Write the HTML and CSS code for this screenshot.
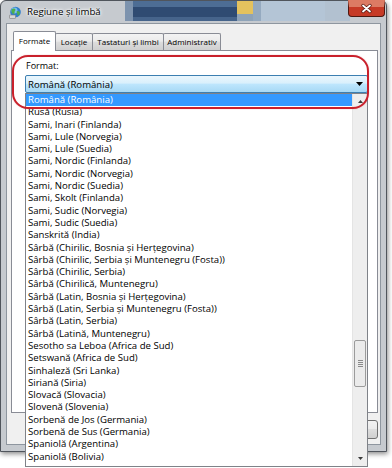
FILE: index.html
```html
<!DOCTYPE html>
<html lang="ro">
<head>
<meta charset="utf-8">
<title>Regiune și limbă</title>
<link rel="stylesheet" href="styles.css">
</head>
<body>
<div class="window">
  <div class="titlebar">
    <svg class="appicon" width="13" height="13" viewBox="0 0 13 13">
      <circle cx="6.5" cy="6" r="5.3" fill="#2f7fcc"/>
      <circle cx="5.5" cy="4.6" r="3" fill="#7cc0f0"/>
      <path d="M3 3.2 C4.5 2.2 6 2.4 6.4 3.6 C6.8 4.8 5.2 5.2 5.6 6.6 C5.9 7.8 4.6 8.6 3.6 7.6 C2.6 6.6 2 4.4 3 3.2 Z" fill="#4fb04a"/>
      <path d="M8 5.2 C9.2 4.8 10.8 5.6 10.9 7 C10.6 8.6 9.4 9.8 8.6 9.2 C8 8.4 8.6 7.4 7.8 6.6 C7.4 6 7.5 5.4 8 5.2 Z" fill="#4fb04a"/>
      <rect x="0.5" y="9" width="6" height="3.5" rx="0.6" fill="#d8d8d8" stroke="#7a7a7a" stroke-width="0.6"/>
    </svg>
    <span class="title">Regiune și limbă</span>
    <div class="desk">
      <div class="d0"></div>
      <div class="d1"></div>
      <div class="d2"></div>
      <div class="d3"></div>
      <div class="d4"></div>
    </div>
    <div class="close">
      <svg width="13" height="11" viewBox="0 0 13 11">
        <path d="M3 2.5 L10 8.5 M10 2.5 L3 8.5" stroke="#5a1a12" stroke-width="3.4" stroke-linecap="round"/>
        <path d="M3 2.5 L10 8.5 M10 2.5 L3 8.5" stroke="#ffffff" stroke-width="1.8" stroke-linecap="round"/>
      </svg>
    </div>
  </div>
  <div class="client">
    <div class="tabs">
      <div class="tab active w1">Formate</div>
      <div class="tab w2">Locație</div>
      <div class="tab w3">Tastaturi și limbi</div>
      <div class="tab w4">Administrativ</div>
    </div>
    <div class="panel">
      <div class="label">Format:</div>
      <div class="combo">
        <span>Română (România)</span>
        <svg class="carrow" width="7" height="4" viewBox="0 0 7 4"><path d="M0 0 H7 L3.5 4 Z" fill="#000"/></svg>
      </div>
    </div>
    <div class="buttons">
      <div class="btn">OK</div>
      <div class="btn">Anulare</div>
      <div class="btn">Aplicare</div>
    </div>
  </div>
</div>

<div class="droplist">
  <ul class="items">
    <li class="sel">Română (România)</li>
    <li>Rusă (Rusia)</li>
    <li>Sami, Inari (Finlanda)</li>
    <li>Sami, Lule (Norvegia)</li>
    <li>Sami, Lule (Suedia)</li>
    <li>Sami, Nordic (Finlanda)</li>
    <li>Sami, Nordic (Norvegia)</li>
    <li>Sami, Nordic (Suedia)</li>
    <li>Sami, Skolt (Finlanda)</li>
    <li>Sami, Sudic (Norvegia)</li>
    <li>Sami, Sudic (Suedia)</li>
    <li>Sanskrită (India)</li>
    <li>Sârbă (Chirilic, Bosnia și Herțegovina)</li>
    <li>Sârbă (Chirilic, Serbia și Muntenegru (Fosta))</li>
    <li>Sârbă (Chirilic, Serbia)</li>
    <li>Sârbă (Chirilică, Muntenegru)</li>
    <li>Sârbă (Latin, Bosnia și Herțegovina)</li>
    <li>Sârbă (Latin, Serbia și Muntenegru (Fosta))</li>
    <li>Sârbă (Latin, Serbia)</li>
    <li>Sârbă (Latină, Muntenegru)</li>
    <li>Sesotho sa Leboa (Africa de Sud)</li>
    <li>Setswană (Africa de Sud)</li>
    <li>Sinhaleză (Sri Lanka)</li>
    <li>Siriană (Siria)</li>
    <li>Slovacă (Slovacia)</li>
    <li>Slovenă (Slovenia)</li>
    <li>Sorbenă de Jos (Germania)</li>
    <li>Sorbenă de Sus (Germania)</li>
    <li>Spaniolă (Argentina)</li>
    <li>Spaniolă (Bolivia)</li>
  </ul>
  <div class="vscroll">
    <div class="sbtn"><svg width="5" height="3" viewBox="0 0 5 3"><path d="M0 3 L2.5 0 L5 3 Z" fill="#3a3a3a"/></svg></div>
    <div class="track">
      <div class="thumb"><span></span><span></span><span></span><span></span></div>
    </div>
    <div class="sbtn"><svg width="5" height="3" viewBox="0 0 5 3"><path d="M0 0 L5 0 L2.5 3 Z" fill="#3a3a3a"/></svg></div>
  </div>
</div>

<div class="ring"></div>
</body>
</html>
```

FILE: styles.css
```css
* { box-sizing: border-box; }

body {
  margin: 0;
  width: 392px;
  height: 468px;
  overflow: hidden;
  background: #ffffff;
  position: relative;
  font-family: "Open Sans", "Liberation Sans", sans-serif;
  color: #000;
}

.window {
  width: 387px;
  height: 452px;
  border: 1px solid #50555c;
  border-radius: 6px 6px 0 0;
  box-shadow: 1px 2px 5px rgba(0, 0, 0, 0.45);
  padding: 0 5px 6px 5px;
  display: flex;
  flex-direction: column;
  background: #c6cacf;
}

.titlebar {
  height: 22px;
  display: flex;
  align-items: stretch;
  flex: none;
}

.appicon {
  margin-left: 3px;
  margin-top: 5px;
  flex: none;
}

.title {
  margin-left: 5px;
  margin-top: 5px;
  font-size: 9.7px;
  line-height: 12px;
  text-shadow: 0 0 5px #fff, 0 0 3px #fff, 0 0 2px #fff;
  color: #000;
  white-space: nowrap;
  flex: none;
}

.desk {
  flex: 1;
  margin-left: 24px;
  margin-right: -2px;
  height: 20px;
  display: flex;
  background-color: #3f5f87;
}

.d0 { width: 8px; background-color: #7d93ae; }
.d1 { width: 104px; background-color: #2f4b72; border-top: 6px solid #4d6d94; border-bottom: 4px solid #46648b; }
.d2 { width: 16px; background-color: #e4c25e; border-bottom: 7px solid #8ea3b8; }
.d3 { width: 72px; background-color: #b4c5d6; border-left: 8px solid #95aac0; }
.d4 { flex: 1; background-color: #b2c1d0; }

.close {
  margin-right: -4px;
  margin-top: -1px;
  width: 37px;
  height: 17px;
  flex: none;
  border: 1px solid #4e1810;
  border-top: 7px solid #dc7b64;
  border-radius: 0 0 4px 4px;
  background-color: #c63a26;
  display: flex;
  align-items: center;
  justify-content: center;
}

.close svg { margin-top: -7px; }

.client {
  flex: 1;
  border: 1px solid #8e969f;
  background: #f0f0f0;
  display: flex;
  flex-direction: column;
  padding: 7px 2px 0 4px;
}

.tabs {
  height: 19px;
  display: flex;
  align-items: flex-end;
  padding-left: 2px;
  flex: none;
}

.tab {
  height: 17px;
  border: 1px solid #898c95;
  border-bottom: none;
  margin-left: -1px;
  border-radius: 2px 2px 0 0;
  background: linear-gradient(#f3f3f3 0%, #ebebeb 45%, #dddddd 50%, #cfcfcf 100%);
  font-size: 8px;
  line-height: 15px;
  text-align: center;
  color: #000;
  white-space: nowrap;
}

.tab.active {
  height: 20px;
  margin-bottom: -1px;
  margin-left: 0;
  background: #ffffff;
  position: relative;
  z-index: 2;
  line-height: 18px;
}

.w1 { width: 43px; }
.w2 { width: 38px; }
.w3 { width: 72px; }
.w4 { width: 58px; }

.panel {
  flex: 1;
  border: 1px solid #898c95;
  background: #ffffff;
  padding: 9px 9px 0 13px;
}

.label {
  font-size: 9px;
  line-height: 12px;
  margin-left: 1px;
  margin-bottom: 3px;
}

.combo {
  height: 18px;
  border: 1px solid #3c7fb1;
  border-radius: 2px;
  background: linear-gradient(#eaf6fd 0%, #d9f0fc 45%, #bee6fd 50%, #a7d9f5 100%);
  display: flex;
  align-items: center;
  padding: 0 4px 0 2px;
  font-size: 9.6px;
}

.carrow { margin-left: auto; }

.buttons {
  height: 31px;
  flex: none;
  display: flex;
  justify-content: flex-end;
  align-items: center;
  gap: 6px;
  padding-top: 1px;
}

.btn {
  width: 62px;
  height: 19px;
  border: 1px solid #707070;
  border-radius: 3px;
  background: linear-gradient(#f2f2f2 0%, #ebebeb 45%, #dddddd 50%, #cfcfcf 100%);
  font-size: 9px;
  line-height: 17px;
  text-align: center;
}

.droplist {
  position: absolute;
  left: 25px;
  top: 93px;
  width: 343px;
  height: 374px;
  border: 1px solid #7f8288;
  background: #ffffff;
  display: flex;
}

.items {
  list-style: none;
  margin: 0;
  padding: 0;
  flex: 1;
  overflow: hidden;
}

.items li {
  height: 12.3px;
  line-height: 12.3px;
  font-size: 9.6px;
  padding-left: 2px;
  white-space: nowrap;
  color: #000;
}

.items li.sel {
  background: #3399ff;
  color: #ffffff;
}

.vscroll {
  width: 15px;
  flex: none;
  display: flex;
  flex-direction: column;
  background-color: #eeeeee;
  border-left: 1px solid #e4e4e4;
}

.sbtn {
  height: 15px;
  flex: none;
  display: flex;
  align-items: center;
  justify-content: center;
}

.track {
  flex: 1;
  padding: 0 1px;
}

.thumb {
  margin-top: 231px;
  height: 47px;
  border: 1px solid #9b9b9b;
  border-radius: 2px;
  background-color: #ebebeb;
  display: flex;
  flex-direction: column;
  align-items: center;
  justify-content: center;
  gap: 1px;
}

.thumb span {
  width: 5px;
  height: 1px;
  background: #8a8a8a;
}

.ring {
  position: absolute;
  left: 12px;
  top: 55px;
  width: 357px;
  height: 54px;
  border: 2px solid #c9202b;
  border-radius: 16px;
  box-shadow: 0 0 1px rgba(201, 32, 43, 0.6);
}
```
